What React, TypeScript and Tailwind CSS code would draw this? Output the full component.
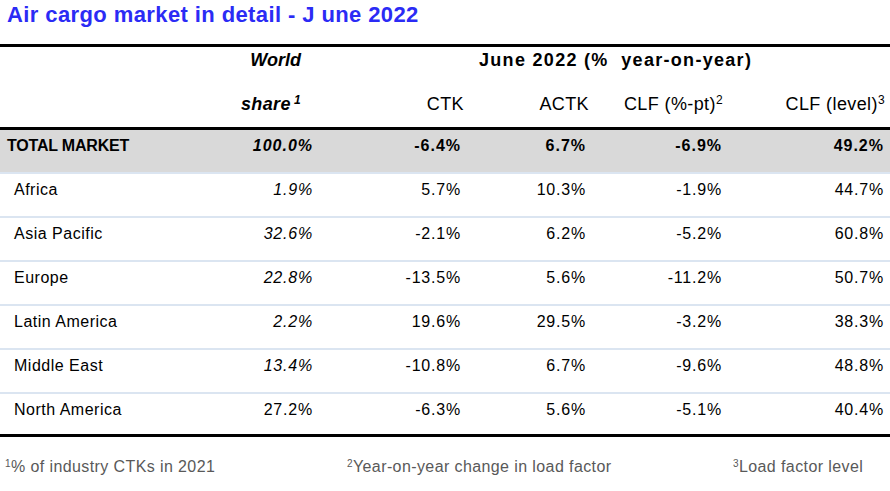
import React from "react";

const rows = [
  { region: "Africa", share: "1.9%", ctk: "5.7%", actk: "10.3%", clfPt: "-1.9%", clf: "44.7%", italic: true },
  { region: "Asia Pacific", share: "32.6%", ctk: "-2.1%", actk: "6.2%", clfPt: "-5.2%", clf: "60.8%", italic: true },
  { region: "Europe", share: "22.8%", ctk: "-13.5%", actk: "5.6%", clfPt: "-11.2%", clf: "50.7%", italic: true },
  { region: "Latin America", share: "2.2%", ctk: "19.6%", actk: "29.5%", clfPt: "-3.2%", clf: "38.3%", italic: true },
  { region: "Middle East", share: "13.4%", ctk: "-10.8%", actk: "6.7%", clfPt: "-9.6%", clf: "48.8%", italic: true },
  { region: "North America", share: "27.2%", ctk: "-6.3%", actk: "5.6%", clfPt: "-5.1%", clf: "40.4%", italic: false },
];

const dataCols = "grid grid-cols-[200px_113px_148px_125px_136px_162px]";
const headCols = "grid grid-cols-[200px_101px_163px_125px_134px_162px]";

export default function App() {
  return (
    <div className="w-[890px] h-[491px] bg-white text-black font-['Liberation_Sans',Arial,sans-serif] overflow-hidden">
      {/* Title */}
      <div className="h-[44px] pl-[7px] pt-[2px]">
        <h1 className="text-[22px] leading-[26px] font-bold tracking-[0.4px] text-[#2b2bf5]">
          Air cargo market in detail - J une 2022
        </h1>
      </div>

      {/* Header */}
      <div className="border-t-[3px] border-b-[3px] border-black">
        <div className={`${headCols} h-[42px] pt-[2px] text-[18px] leading-[22px] font-bold`}>
          <div />
          <div className="text-right italic">World</div>
          <div className="col-span-4 pl-[178px] tracking-[1.3px] whitespace-pre">June 2022 (%  year-on-year)</div>
        </div>
        <div className={`${headCols} h-[38px] pt-[4px] text-[18px] leading-[22px] tracking-[0.4px]`}>
          <div />
          <div className="text-right font-bold italic">
            share<sup className="text-[12px] ml-[3px]">1</sup>
          </div>
          <div className="text-right">CTK</div>
          <div className="text-right">ACTK</div>
          <div className="text-right">
            CLF (%-pt)<sup className="text-[12px]">2</sup>
          </div>
          <div className="text-right">
            CLF (level)<sup className="text-[12px]">3</sup>
          </div>
        </div>
      </div>

      {/* Total */}
      <div className={`${dataCols} h-[44px] pt-[6px] bg-[#d9d9d9] border-b-2 border-[#dbe5f1] text-[16px] leading-[20px] font-bold`}>
        <div className="pl-[7px] tracking-[-0.2px]">TOTAL MARKET</div>
        <div className="text-right italic tracking-[1px]">100.0%</div>
        <div className="text-right tracking-[1px]">-6.4%</div>
        <div className="text-right tracking-[1px]">6.7%</div>
        <div className="text-right tracking-[1px]">-6.9%</div>
        <div className="text-right tracking-[1px]">49.2%</div>
      </div>

      {/* Regions */}
      <div className="border-b-[3px] border-black">
        {rows.map((r, i) => (
          <div
            key={r.region}
            className={`${dataCols} pt-[6px] text-[16px] leading-[20px] tracking-[0.8px] ${
              i < rows.length - 1 ? "h-[44px] border-b-2 border-[#dbe5f1]" : "h-[40px]"
            }`}
          >
            <div className="pl-[14px] tracking-[0.5px]">{r.region}</div>
            <div className={`text-right ${r.italic ? "italic" : ""}`}>{r.share}</div>
            <div className="text-right">{r.ctk}</div>
            <div className="text-right">{r.actk}</div>
            <div className="text-right">{r.clfPt}</div>
            <div className="text-right">{r.clf}</div>
          </div>
        ))}
      </div>

      {/* Footnotes */}
      <div className="grid grid-cols-[347px_386px_1fr] pt-[20px] text-[16px] leading-[20px] tracking-[0.4px] text-[#595959]">
        <div className="pl-[5px]">
          <sup className="text-[10px]">1</sup>% of industry CTKs in 2021
        </div>
        <div>
          <sup className="text-[10px]">2</sup>Year-on-year change in load factor
        </div>
        <div>
          <sup className="text-[10px]">3</sup>Load factor level
        </div>
      </div>
    </div>
  );
}
